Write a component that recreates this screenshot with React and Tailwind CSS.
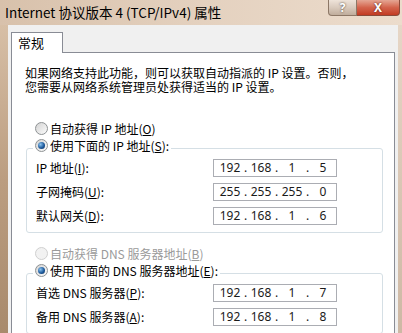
import { Fragment } from "react";

const cjk = { fontFamily: '"Noto Sans CJK SC", "Noto Sans", sans-serif' };
const num = { fontFamily: '"Noto Sans", "Liberation Sans", sans-serif' };

function Radio({ checked, disabled }) {
	return (
		<span className={`relative inline-block shrink-0 w-[13px] h-[13px] rounded-full border ${disabled ? "border-[#d0d0d0] bg-[#f2f2f2]" : "border-[#8e9294] bg-linear-to-br from-[#d4d4d4] to-[#fbfbfb]"}`}>
			{checked && <span className="absolute left-[2px] top-[2px] w-[7px] h-[7px] rounded-full bg-[radial-gradient(circle_at_35%_35%,#8cc4f0,#1d5a9c_55%,#0d2a55)]" />}
		</span>
	);
}

function Choice({ checked, disabled, children }) {
	return (
		<div className={`flex items-center h-[17px] gap-[2px] ${disabled ? "text-[#9a9a9a]" : "text-black"}`}>
			<Radio checked={checked} disabled={disabled} />
			<span className="leading-[17px]">{children}</span>
		</div>
	);
}

function IpBox({ parts }) {
	return (
		<div className="flex items-center w-[124px] h-[18px] border border-[#abadb3] bg-white pl-[4px] text-[12px] text-[#1a1a1a]" style={num}>
			{parts.map((p, i) => (
				<Fragment key={i}>
					{i > 0 && <span className="w-[7px] text-center">.</span>}
					<span className="w-[24px] text-center">{p}</span>
				</Fragment>
			))}
		</div>
	);
}

function Row({ label, parts }) {
	return (
		<div className="flex items-center h-[18px]">
			<span className="w-[177px]">{label}</span>
			<IpBox parts={parts} />
		</div>
	);
}

function Group({ legend, children }) {
	return (
		<div className="relative ml-[1px] mt-[11px] w-[357px] border border-[#d5dfe5] rounded-[3px] pt-[10px] pb-[7px] pl-[9px] flex flex-col gap-[6px]">
			{/* legend sits over the border line */}
			<div className="absolute -top-[12px] left-[6px] bg-white px-[2px]">{legend}</div>
			{children}
		</div>
	);
}

const u = (c) => <span className="underline">{c}</span>;

export default function App() {
	return (
		<div className="w-[402px] h-[333px] overflow-hidden flex flex-col bg-[#c9ae94]" style={cjk}>
			{/* Title bar */}
			<div className="h-[25px] shrink-0 flex bg-linear-to-r from-[#d8c1ab] via-[#e4d1bf] to-[#ecdccc]">
				<div className="flex-1 pl-[5px] pt-[3px] text-[13.5px] leading-[18px] text-black">Internet 协议版本 4 (TCP/IPv4) 属性</div>
				<div className="flex h-[16px] pr-[2px]">
					<div className="w-[29px] h-[16px] rounded-bl-[4px] border border-t-0 border-[#8c7766] bg-linear-to-b from-[#eee3d9] via-[#d9cabd] to-[#c0ad9c] flex items-center justify-center text-white text-[12px] font-bold leading-none [text-shadow:0_0_2px_#3a2c20]" style={num}>?</div>
					<div className="w-[43px] h-[16px] rounded-br-[4px] border border-t-0 border-l-0 border-[#8a4a3a] bg-linear-to-b from-[#e4a694] via-[#d3634c] to-[#c23a22] flex items-center justify-center text-white text-[12px] font-bold leading-none [text-shadow:0_0_2px_#4a1208]" style={num}>X</div>
				</div>
			</div>

			<div className="flex flex-1">
				{/* left frame */}
				<div className="w-[8px] bg-linear-to-b from-[#d7bfa6] via-[#bb9d80] to-[#a88a6c]" />

				{/* Dialog body */}
				<div className="flex-1 bg-[#f0f0f0] pt-[7px] px-[3px] flex flex-col">
					<div className="relative z-10 -mb-[1px] w-[52px] h-[21px] border border-b-0 border-[#898c95] bg-white pl-[6px] pt-[1px] text-[13px] leading-[17px]">常规</div>

					<div className="flex-1 border border-[#898c95] bg-white pl-[13px] pt-[13px] text-[12px] text-black">
						<p className="leading-[14px]">
							如果网络支持此功能，则可以获取自动指派的 IP 设置。否则，
							<br />
							您需要从网络系统管理员处获得适当的 IP 设置。
						</p>

						<div className="ml-[10px] mt-[26px]">
							<Choice>自动获得 IP 地址({u("O")})</Choice>
						</div>

						<Group legend={<Choice checked>使用下面的 IP 地址({u("S")}):</Choice>}>
							<Row label={<>IP 地址({u("I")}):</>} parts={["192", "168", "1", "5"]} />
							<Row label={<>子网掩码({u("U")}):</>} parts={["255", "255", "255", "0"]} />
							<Row label={<>默认网关({u("D")}):</>} parts={["192", "168", "1", "6"]} />
						</Group>

						<div className="ml-[10px] mt-[12px]">
							<Choice disabled>自动获得 DNS 服务器地址({u("B")})</Choice>
						</div>

						<Group legend={<Choice checked>使用下面的 DNS 服务器地址({u("E")}):</Choice>}>
							<Row label={<>首选 DNS 服务器({u("P")}):</>} parts={["192", "168", "1", "7"]} />
							<Row label={<>备用 DNS 服务器({u("A")}):</>} parts={["192", "168", "1", "8"]} />
						</Group>
					</div>
				</div>

				{/* right frame */}
				<div className="w-[4px] bg-linear-to-b from-[#e6d6c6] to-[#cdb8a4]" />
			</div>
		</div>
	);
}
